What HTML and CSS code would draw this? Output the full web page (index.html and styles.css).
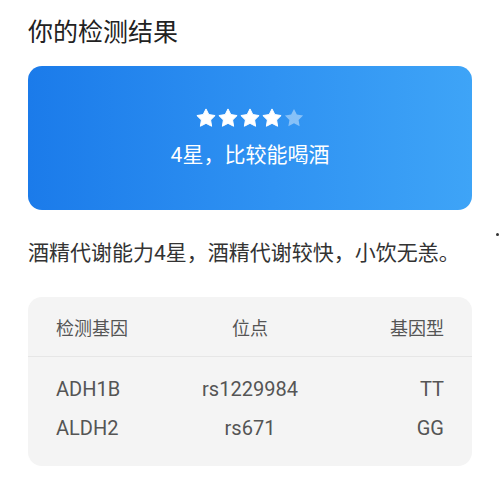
FILE: index.html
```html
<!DOCTYPE html>
<html lang="zh">
<head>
<meta charset="utf-8">
<link rel="stylesheet" href="styles.css">
</head>
<body>
<div class="page">
  <h1 class="title">你的检测结果</h1>
  <div class="result-card">
    <div class="stars">
      <svg class="star" viewBox="0 0 24 24"><path d="M12 1.1L15.41 7.91 22.94 9.05 17.52 14.39 18.76 21.9 12 18.4 5.24 21.9 6.48 14.39 1.06 9.05 8.59 7.91Z"/></svg>
      <svg class="star" viewBox="0 0 24 24"><path d="M12 1.1L15.41 7.91 22.94 9.05 17.52 14.39 18.76 21.9 12 18.4 5.24 21.9 6.48 14.39 1.06 9.05 8.59 7.91Z"/></svg>
      <svg class="star" viewBox="0 0 24 24"><path d="M12 1.1L15.41 7.91 22.94 9.05 17.52 14.39 18.76 21.9 12 18.4 5.24 21.9 6.48 14.39 1.06 9.05 8.59 7.91Z"/></svg>
      <svg class="star" viewBox="0 0 24 24"><path d="M12 1.1L15.41 7.91 22.94 9.05 17.52 14.39 18.76 21.9 12 18.4 5.24 21.9 6.48 14.39 1.06 9.05 8.59 7.91Z"/></svg>
      <svg class="star star-off" viewBox="0 0 24 24"><path d="M12 1.1L15.41 7.91 22.94 9.05 17.52 14.39 18.76 21.9 12 18.4 5.24 21.9 6.48 14.39 1.06 9.05 8.59 7.91Z"/></svg>
    </div>
    <div class="rating-text">4星，比较能喝酒</div>
  </div>
  <p class="desc">酒精代谢能力4星，酒精代谢较快，小饮无恙。</p>
  <div class="table-card">
    <div class="row head">
      <span class="c1">检测基因</span><span class="c2">位点</span><span class="c3">基因型</span>
    </div>
    <div class="body">
      <div class="row"><span class="c1">ADH1B</span><span class="c2">rs1229984</span><span class="c3">TT</span></div>
      <div class="row"><span class="c1">ALDH2</span><span class="c2">rs671</span><span class="c3">GG</span></div>
    </div>
  </div>
  <span class="dot"></span>
</div>
</body>
</html>
```
FILE: styles.css
```css
* { box-sizing: border-box; }
html, body { margin: 0; padding: 0; background: #fff; }
body {
  font-family: Roboto, "Noto Sans CJK SC", "Noto Sans", sans-serif;
  width: 500px;
  height: 479px;
  overflow: hidden;
}
.page {
  position: relative;
  padding: 14px 28px 0 28px;
}
.title {
  margin: 0;
  font-weight: 400;
  font-size: 25px;
  line-height: 32px;
  color: #222;
  font-family: "Noto Sans CJK SC", sans-serif;
}
.result-card {
  margin-top: 20px;
  height: 144px;
  border-radius: 14px;
  background: linear-gradient(90deg, #1b7bea 0%, #2f92f2 55%, #3ea4f7 100%);
  display: flex;
  flex-direction: column;
  align-items: center;
  justify-content: center;
  gap: 13px;
}
.stars {
  display: flex;
  gap: 2px;
  height: 20px;
  align-items: center;
}
.star {
  width: 20px;
  height: 20px;
  flex: 0 0 20px;
  display: block;
  fill: #fff;
  stroke: #fff;
  stroke-width: 1.2;
  stroke-linejoin: round;
}
.star-off { fill: rgba(255,255,255,0.42); stroke: none; }
.rating-text {
  color: #fff;
  font-size: 21px;
  line-height: 28px;
  font-family: Roboto, "Noto Sans CJK SC", sans-serif;
}
.desc {
  margin: 28px 0 0 0;
  font-size: 21px;
  line-height: 30px;
  color: #333;
  font-family: Roboto, "Noto Sans CJK SC", sans-serif;
  white-space: nowrap;
}
.table-card {
  margin-top: 29px;
  height: 169px;
  border-radius: 14px;
  background: #f4f4f4;
}
.row {
  display: grid;
  grid-template-columns: 1fr 1fr 1fr;
  padding: 0 28px;
  align-items: center;
}
.head {
  height: 60px;
  border-bottom: 1px solid #e6e6e6;
  font-size: 18px;
  color: #555;
  font-family: "Noto Sans CJK SC", sans-serif;
}
.body { padding-top: 12px; }
.body .row {
  height: 39px;
  font-size: 20px;
  color: #555;
}
.c1 { text-align: left; }
.c2 { text-align: center; }
.c3 { text-align: right; }
.dot {
  position: absolute;
  left: 496px;
  top: 233px;
  width: 3px;
  height: 3px;
  border-radius: 50%;
  background: #333;
}
```
